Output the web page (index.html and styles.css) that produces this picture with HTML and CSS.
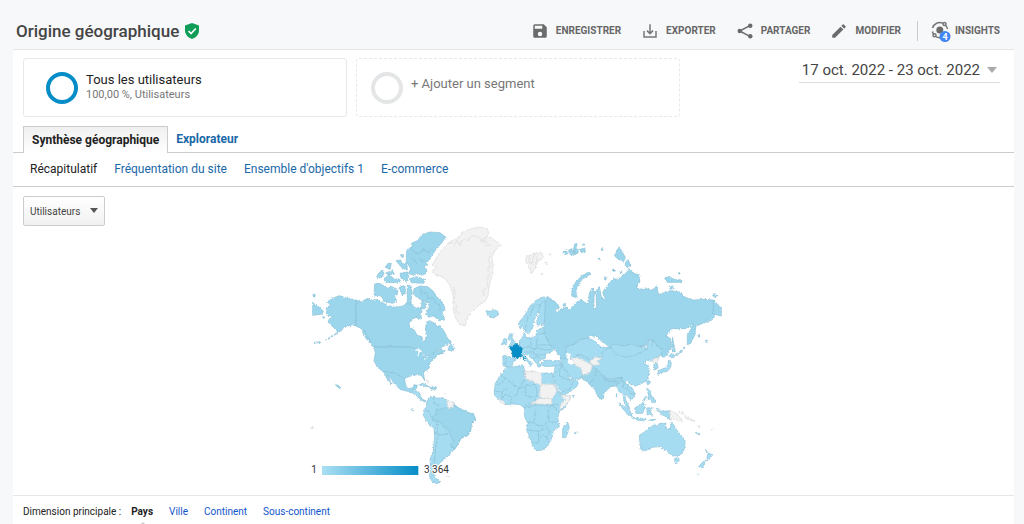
FILE: index.html
```html
<!DOCTYPE html>
<html lang="fr">
<head>
<meta charset="utf-8">
<title>Origine géographique</title>
<link rel="stylesheet" href="styles.css">
</head>
<body>
<header class="topbar">
  <h1 class="title">Origine géographique</h1>
  <svg class="shield" viewBox="0 0 14 16" aria-hidden="true"><path fill="#0f9d58" d="M7 0l7 2.600v5c0 4-3 7.200-7 8.400-4-1.200-7-4.400-7-8.400v-5z"/><path d="M3.500 8l2.500 2.500 4.800-5" fill="none" stroke="#fff" stroke-width="1.600"/></svg>
  <div class="actions">
    <button class="action"><svg class="icon" viewBox="0 0 24 24"><path fill="#6b6b6b" d="M17 3H5a2 2 0 0 0-2 2v14a2 2 0 0 0 2 2h14a2 2 0 0 0 2-2V7zm-5 16a3 3 0 1 1 0-6 3 3 0 0 1 0 6zm3-10H5V5h10z"/></svg>ENREGISTRER</button>
    <button class="action"><svg class="icon" viewBox="0 0 24 24"><path fill="none" stroke="#777" stroke-width="2" d="M4 12v8h16v-8M12 3v12M8 11.500L12 15.500l4-4"/></svg>EXPORTER</button>
    <button class="action"><svg class="icon" viewBox="0 0 24 24"><path fill="none" stroke="#6b6b6b" stroke-width="2" d="M19 4.500L5 12l14 7.500"/><g fill="#6b6b6b"><circle cx="19" cy="5" r="3"/><circle cx="5" cy="12" r="3"/><circle cx="19" cy="19" r="3"/></g></svg>PARTAGER</button>
    <button class="action"><svg class="icon" viewBox="0 0 24 24"><path fill="#6b6b6b" d="M3 17.250V21h3.750L17.800 9.940l-3.750-3.750zM20.700 7.040a1 1 0 0 0 0-1.410l-2.340-2.340a1 1 0 0 0-1.410 0l-1.830 1.830 3.750 3.750z"/></svg>MODIFIER</button>
    <button class="action insights"><svg class="insight-icon" viewBox="0 0 20 20"><g fill="none" stroke="#777" stroke-width="1.500"><path d="M1.500 7A7.500 7.500 0 0 1 12 2.300M14.500 4.200A7.500 7.500 0 0 1 16.500 8M1.500 10.500A7.500 7.500 0 0 0 2.400 13M5 15.700A7.500 7.500 0 0 0 10 16.500"/><circle cx="13.500" cy="3" r="1.500"/><circle cx="3.500" cy="14.300" r="1.500"/></g><circle cx="8.800" cy="9" r="3.500" fill="#6b6b6b"/><circle cx="14" cy="15.500" r="5.500" fill="#4285f4"/><text x="14" y="18.500" text-anchor="middle" class="badge-text">4</text></svg>INSIGHTS</button>
  </div>
</header>
<main class="panel">
  <section class="segments">
    <div class="segment"><span class="ring"></span><div class="segment-text"><div class="segment-name">Tous les utilisateurs</div><div class="segment-info">100,00 %, Utilisateurs</div></div></div>
    <button class="segment segment-add"><span class="ring ring-empty"></span><span class="add-label">+ Ajouter un segment</span></button>
    <button class="date">17 oct. 2022 - 23 oct. 2022<span class="caret"></span></button>
  </section>
  <nav class="tabs"><a class="tab tab-active" href="#">Synthèse géographique</a><a class="tab" href="#">Explorateur</a></nav>
  <nav class="subtabs"><a class="current" href="#">Récapitulatif</a><a href="#">Fréquentation du site</a><a href="#">Ensemble d'objectifs 1</a><a href="#">E-commerce</a></nav>
  <section class="report">
    <div class="metric"><select class="metric-select" aria-label="Statistique"><option>Utilisateurs</option></select><span class="metric-caret"></span></div>
    <svg class="map" viewBox="0 0 1296 804" role="img" aria-label="Utilisateurs par pays">
      <defs>
        <linearGradient id="scale"><stop offset="0" stop-color="#aadff3"/><stop offset="1" stop-color="#058dc7"/></linearGradient>
        <filter id="coast" x="-2%" y="-2%" width="104%" height="104%" color-interpolation-filters="sRGB"><feTurbulence type="fractalNoise" baseFrequency="0.2" numOctaves="2" seed="4"/><feDisplacementMap in="SourceGraphic" scale="9" xChannelSelector="R" yChannelSelector="G"/></filter>
      </defs>
      <g class="land" filter="url(#coast)">
        <g class="mid">
          <path d="M38 248L70 270 66 282 38 286zM39 223h7v8h-7zM68 290l7 2-5 4z"/>
          <path d="M80 262L92 256 82 246 94 236 118 227 140 234 168 240V318L158 314 145 318 132 320 126 330 112 340 92 352 76 360 108 342 112 334 96 318 84 306 88 296 100 292 80 284 78 274zM44 366h8v3h-8zM56 365h6v3h-6z"/>
          <path d="M168 240L185 246 196 238 210 236 214 242 232 238 240 244 262 256 285 262 310 258 322 246 335 252 345 264 362 262 366 276 352 290 338 296 326 308 330 322 342 330 352 346 366 350 370 366 376 362 382 346 376 330 380 306 390 302 404 310 412 320 420 316 434 336 440 350 454 368 440 374 420 384 408 394 398 404 380 408 370 416 366 402 350 386 330 381H222L212 370 200 350 184 326 168 318z"/>
          <path d="M448 378L454 372 464 386 454 394 444 390zM420 398l16-8-6 10-8 2zM188 328l12 16 12 22-10-6-14-22z"/>
          <path d="M342 206L360 198 384 200 400 214 412 232 430 250 436 268 426 276 434 300 418 302 400 288 386 292 376 282 388 262 384 248 366 240 350 232 340 222zM352 294l8-10 6 10-8 6zM366 240l12 10-4 16-10 0z"/>
          <path class="line" d="M362 204l4 20 14-8 4 20 16-4 6 18 14 4 0 18"/>
          <path d="M224 192L238 190 256 200 264 206 270 198 290 206 292 222 284 230 290 244 278 250 250 244 246 230 236 226 222 228zM298 202l16-6 4 24-12 4zM322 196h10l4 26-4 30h-10z"/>
          <path d="M334 70L352 62 366 44 390 36 420 38 436 50 430 64 414 80 404 94 392 112 388 122 376 126 384 134 372 142 382 150 378 160 368 166 350 160 340 166 326 160 332 146 326 136 318 120 320 92 328 82 336 84zM328 176L350 170 374 178 372 190 334 188z"/>
          <path class="line" d="M334 82l10 16 16 2 10-14 14 12 14-12M330 112l16 8 4 14M356 112l8 14 10-6"/>
          <path d="M228 168L246 150 252 160 246 172 236 174zM252 176L268 164 284 178 300 176 302 186 280 188 256 186zM256 142l8-12h10l-4 18zM288 122l14-2 6 14 12-8 2 24-16-6zM300 160l22-4 4 14-6 14-16-8zM304 104h6v8h-6zM258 158l20-6 4 10-18 4z"/>
          <path d="M222 381H330L348 386 360 398 372 404 370 414 384 410 398 402 412 392 424 386 430 396 412 406 404 416 388 428 388 444 370 458 374 482 366 468 352 464 338 466 316 474 314 480 300 468 288 458 272 458 250 454 232 442 222 422 226 400z"/>
          <path d="M250 454L272 458 288 458 300 468 314 480 318 498 324 506 338 504 342 494 352 496 348 508 340 510 330 516 300 508 286 494 264 464 272 486 275 492 262 478zM104 493l8 3 10 6-2 4-8-6z"/>
        </g>
        <g class="light">
          <path d="M330 516L340 510 346 512 360 518V532L372 540 378 540 370 545 356 534 344 522zM356 494l12-4 24 12-14-2zM394 502h16l-2 6h-14zM333 568h5v4h-5z"/>
          <path d="M380 544L386 534 402 528 406 534 430 534 440 540 462 548 468 560 484 568 500 576 520 582 526 596 514 612 512 632 504 646 484 654 474 672 462 690 450 694 452 704 434 712 428 722 418 730 410 744 400 758 404 770 420 786 410 791 396 784 388 768 392 750 390 720 400 690 404 650 402 624 384 610 370 586 372 568 380 560z"/>
          <path class="strong" d="M396 592L408 584V570L420 568 436 562 444 566 462 560 468 558 484 568 500 576 520 582 526 596 514 612 512 632 504 646 484 654 474 672 464 688 450 676 460 662 452 646 446 630 430 620 420 604 400 602z"/>
          <path class="line" d="M372 568L386 574 396 592M402 624L404 642 412 642V604M412 642L430 644 446 640M412 650L406 690 402 730M402 528V550L416 556 408 570"/>
        </g>
        <g class="none">
          <path d="M440 540L462 548 460 562 444 566zM376 478l12 8-4 4zM434 518h4v4h-4zM440 768h8v2h-8zM34 622h6v3h-6z"/>
          <path d="M396 136L412 110 426 88 450 66 480 50 488 36 520 24 556 22 568 36 562 48 592 66 602 76 584 92 576 112 580 140 578 166 572 180 566 206 564 226 556 244 538 254 522 270 508 284 498 300 496 318 478 312 466 290 458 262 460 232 454 204 436 176 420 168 402 164 398 150 412 142z"/>
          <path class="line" d="M450 66l12 10 8-14 10 14 10-20 14 6 12-16 18 4 10 10 16-8M562 48l-20 14 20 4-10 12 24-4M572 100l-8 20 8 14-10 16 8 10-10 20 4 20-14 10 2 18M460 200l6 20-6 20 10 14-4 16 14 14"/>
          <path d="M676 112L690 106 702 100 726 98 732 112 712 124 706 144 696 160 686 142 678 126zM736 128h6v4h-6zM748 102h5v3h-5zM724 160h4v4h-4z"/>
          <path class="line" d="M690 106l-4 20 10 6 6-30 10 12-6 20"/>
        </g>
        <g class="light">
          <path d="M558 272L574 274 578 269 592 272 596 284 580 294 564 288z"/>
          <path d="M656 308L678 282 690 258 710 240 732 230 748 234 740 246 738 300 732 312 712 316 710 300 720 284 716 276 702 300 700 318 686 342 676 336 668 320 660 328z"/>
          <path class="line" d="M676 334L680 304 690 282 706 250 718 258 716 276M718 258L732 240 738 248"/>
          <path d="M628 344L638 340 636 352 644 366 648 374 628 378 634 364 624 356zM612 356l10 2-2 12-16 4z"/>
          <path d="M658 362L668 354 672 338 678 346 676 354 690 352 708 350 710 330 732 322 738 350 748 374 764 386 754 396 736 402V416L720 418 716 428 724 436 716 442 708 426 698 418 686 408 680 402 670 404 690 422 698 430 690 440 686 428 668 412 660 404z"/>
          <path class="line" d="M668 384l20-4 10 6 18-2 16 6 22-2M690 352l4 28M712 352l-4 32M732 340l-24 4M712 376l28-2M676 396l22 0 10-12M698 400l22 6 16-4M700 416l12-6 8 4"/>
          <path d="M608 410L612 406 642 414 650 416 640 426 636 438 624 442 610 438z"/>
          <path class="line" d="M618 412l-2 26"/>
          <path d="M724 428L740 420 762 422 780 422 786 434 766 438 736 440 726 436z"/>
          <path d="M766 438L786 432 780 414 802 416 814 436 826 432 844 444 848 466 840 478 818 476 802 464 810 478 822 480 836 486 830 500 806 518 786 526 778 510 766 490 758 472 762 458z"/>
          <path class="line" d="M766 458l14-10 6-14 12 20 8 12M780 448l-2 20 22 10 12 4M786 516l22-8 12-24"/>
        </g>
        <path class="mid" d="M736 246L746 232 772 250 778 264 764 270 770 276 784 268 800 262 808 270 828 248 844 240 864 254 868 220 876 204 884 212 880 268 890 262 888 212 898 200 904 232 918 242 908 216 928 190 940 176 954 178 970 166 980 158 988 146 1000 160 1016 164 1020 184 1008 204 1028 208 1040 206 1056 210 1070 200 1076 224 1110 212 1140 216 1156 232 1180 240 1210 238 1240 240 1264 264V288L1246 284 1236 300 1210 310 1188 318 1184 346 1172 370 1162 374V346L1180 310 1168 318 1160 326H1114L1098 348 1112 356 1114 380 1100 406 1088 412 1080 400 1086 388 1070 378 1062 362 1046 358 1038 378 1020 380 994 370 976 380 940 376 930 382 906 364 890 350 870 346 856 356 834 360 830 372 800 380 802 412 814 418 786 416 774 402 764 386 748 374 738 350 732 330z"/>
        <path class="line" d="M1240 240v44"/>
        <g class="mid">
          <path d="M815 228L816 204 830 182 848 166 868 156 872 162 846 178 832 200 828 220 832 234zM790 252l6-2 0 8-6 0zM914 170h4v10h-4zM938 150h6v4h-6z"/>
          <path d="M946 98L958 80 968 98 976 112 972 124 958 120 946 110zM976 124l8-6 8 20-16 2zM960 154h6v4h-6z"/>
          <path d="M1094 174L1106 168 1122 178 1146 180 1144 187 1102 187zM1108 198h10l4 8-12 2zM1136 158h4v4h-4zM1238 226l6-4 8 6-10 4zM895 114h4v4h-4zM904 86h5v5h-5z"/>
          <path d="M788 96l12-4 4 8-10 4zM806 90l10-4-2 12 12-10-4 18-14-4zM824 72l8-2-4 14 8 12-10 8-6-12zM838 88l16-4 2 10-12 4zM848 72h5v4h-5z"/>
          <path d="M1118 352L1122 378 1126 396 1116 392V370zM1150 382h4v4h-4zM1194 346h5v5h-5zM1217 360h5v4h-5z"/>
        </g>
        <g class="light">
          <path d="M798 396L798 380 824 372 844 358 866 354 886 364 904 382 930 382 920 404 906 412 884 412 870 422 856 412 840 404 828 408 824 420 812 416 808 402 800 404z"/>
          <path d="M828 408L840 402 860 414 878 426 870 432 854 424 836 416z"/>
          <path d="M930 382L942 372 974 378 994 372 1020 380 1040 386 1046 360 1060 362 1070 378 1086 386 1088 396 1078 410 1066 412 1054 424 1038 420 1030 430 1046 438 1048 460 1040 482 1018 494 1006 498 990 492 980 482 970 490 962 472 930 478 908 468 896 450 880 442 870 430 878 424 904 418 908 406 904 398z"/>
          <path class="line" d="M930 382L950 404 980 412 1010 404 1040 388 1030 376"/>
          <path d="M948 484L964 472 974 490 986 494 998 508 1006 522 1000 536 990 538 982 526 974 524 978 542 986 558 990 568 978 560 972 542 968 520 958 516 950 500z"/>
          <path class="line" d="M968 484l4 20 12 4 8 14 12 0M984 494l-2 14M1060 360l-4 20"/>
          <path d="M1062 430h10l2 14-10 6zM1074 452L1100 442 1106 420 1114 428 1112 442 1102 454 1080 458 1076 464zM1106 408l10-8 10 6-10 8zM1126 404l20-14 2 3-20 14zM1040 484l8-4 0 12-6 2z"/>
          <path d="M1040 506l12 4 0 16 12 12 2 10-10-2-4-10-10 4 4-14zM1040 530l-8 12-2-2 8-12zM948 522l5 0 0 8-5 0z"/>
          <path d="M956 548L968 556 990 572 998 590 982 582 970 568zM994 592l24 2 20 4-2 5-24-3zM1004 564L1030 548 1036 560 1028 580 1008 580zM1040 564l20-2-12 8 10 16-8-4-8 4zM1070 564l8 4-6 6zM1048 600l20-3-8 5z"/>
          <path d="M1074 572L1090 574 1110 572V600L1102 592 1086 584z"/>
          <path d="M1018 646L1036 634 1050 620 1066 614 1072 620 1078 610 1098 610 1096 624 1110 628 1116 606 1130 630 1150 654 1156 670 1152 690 1140 706 1118 708 1100 692 1080 680 1056 682 1042 692 1024 690 1020 670zM1122 714l16 0-6 16-6 0z"/>
          <path d="M1216 688l10 12 12 4-12 16-6-4 4-14zM1220 720L1206 744 1196 740 1208 726zM1188 636l12 6-2 3-12-7zM1192 762h5v3h-5z"/>
        </g>
        <path class="mid" d="M848 478L846 468 868 456 878 442 892 448 908 468 930 480 964 472 966 482 954 490 948 498 932 500 912 520 910 536 902 540 892 526 882 502 872 500 866 488z"/>
        <path class="line" d="M868 490L884 472 890 450M908 468l4 8 20 10 16-4v14"/>
        <g class="light">
          <path d="M620 442L644 440 670 434 674 452 686 456 724 460 756 458 760 470 756 474 766 498 776 516 784 528 812 528 808 544 790 566 776 576 774 598 778 620 760 634 756 652 744 678 726 690 708 692 700 682 692 660 680 630 682 608 674 590 672 562 660 554 640 552 616 554 602 544 584 526 582 518 586 490 602 466z"/>
          <path d="M788 622L804 608 808 622 798 652 788 654zM824 638h4v3h-4zM830 636h4v3h-4zM818 526h5v3h-5z"/>
          <path class="line" d="M602 466L616 474 606 490 590 494M616 474L656 506 676 476 670 450M656 506L650 526 636 532 632 552M586 514L606 516 620 506M606 516l0 22M636 532l-20-10-14 18M656 506l20-8 30-6 6 26-8 26-28 12M676 526l24 6M676 498l0 28M724 494l0 30M672 562l30-6 18 0 34 0 18 14M682 608l20 0 6-38M702 608l10 8 20 2 12-16M754 556l-10 20 4 30M680 630l36 4 0 34-18 0M716 634l24-12 10 14-10 16 4 14M716 656l14-12 14 12M748 606l24 0M790 566l-20-14-16 4"/>
        </g>
        <g class="none">
          <path d="M674 452L686 456 702 454 724 460V498L690 480 676 476zM724 492L764 494 770 514 756 536 736 534 718 532 720 510zM692 550L718 536 754 536 756 552 720 552zM784 528L812 528 808 544 780 570V556L796 540zM596 538L610 542 616 552 604 548z"/>
          <path d="M814 414L832 414 856 424 874 434 876 442 870 458 848 466 844 448 824 432zM870 422L886 412 906 414 892 424 900 434 880 436 872 430zM1054 422L1078 410 1074 424 1064 430zM1110 572L1132 582 1148 604 1130 600 1110 598zM1138 574l14 6-2 3-14-6zM1156 588l26 14-2 3-26-12zM1194 616l6 4 0 4-6-4zM1234 630l6-8-2 10z"/>
        </g>
        <path class="france" d="M626 380L638 380 648 370 658 378 668 386 664 396V410L652 414 638 410 636 394zM670 411h3v8h-3z"/>
        <path class="water" d="M345 391l10-5 10 8-8 3-4 14 4-16M366 398l7 12M372 416l12-4M742 398l8 6 10-5-2 7 18 6-10 7-16-2-12 0zM800 398l12 6-4 10 8 8-2 12-10-6 2-12-6-8z"/>
      </g>
      <rect x="66" y="738" width="289" height="27" fill="url(#scale)"/>
      <text class="legend" x="34" y="760">1</text><text class="legend" x="372" y="760">3 364</text>
    </svg>
  </section>
  <nav class="dimensions"><span>Dimension principale :</span><a class="selected" href="#">Pays</a><a href="#">Ville</a><a href="#">Continent</a><a href="#">Sous-continent</a></nav>
</main>
</body>
</html>
```
FILE: styles.css
```css
* { box-sizing: border-box; }
body { margin: 0; background: #f7f8fa; color: #222; font-family: Roboto, "Liberation Sans", sans-serif; font-size: 13px; overflow: hidden; }
button { font: inherit; color: inherit; background: none; border: 0; padding: 0; }
a { color: #1a68a8; text-decoration: none; }
.topbar { display: flex; align-items: center; height: 49px; padding: 12px 24px 0 16px; }
.title { margin: 0; font-size: 17px; line-height: 24px; font-weight: 500; color: #444; }
.shield { width: 14px; height: 16px; margin-left: 6px; }
.actions { display: flex; align-items: center; margin-left: auto; gap: 20px; }
.action { display: flex; align-items: center; gap: 7px; font-size: 10px; font-weight: 700; line-height: 20px; color: #666; }
.icon { width: 18px; height: 18px; }
.insights { border-left: 1px solid #ccc; padding-left: 13px; gap: 4px; margin-left: -4px; }
.insight-icon { width: 20px; height: 20px; overflow: visible; }
.badge-text { fill: #fff; font-size: 9px; font-weight: 700; }
.panel { margin: 0 10px 0 13px; background: #fff; border-top: 1px solid #e6e6e6; }
.segments { display: flex; align-items: flex-start; gap: 9px; padding: 8px 14px 0 10px; }
.segment { display: flex; flex: 0 1 324px; align-items: center; height: 59px; padding-left: 22px; gap: 8px; border: 1px solid #e8e8e8; border-radius: 3px; text-align: left; }
.segment-add { padding-left: 14px; border-style: dashed; }
.segment-text { padding-bottom: 2px; }
.ring { width: 32px; height: 32px; border: 4px solid #058dc7; border-radius: 50%; }
.ring-empty { border-color: #e4e5e6; }
.segment-name { font-size: 13px; line-height: 16px; color: #222; }
.segment-info { font-size: 11px; line-height: 14px; color: #777; }
.add-label { padding-bottom: 8px; font-size: 13px; color: #777; }
.date { display: flex; align-items: center; gap: 7px; margin-left: auto; padding: 0 3px; height: 25px; border-bottom: 1px solid #ddd; font-size: 15px; color: #444; }
.caret { border: 5px solid transparent; border-top: 6px solid #aaa; border-bottom: 0; }
.tabs { display: flex; margin-top: 9px; padding-left: 10px; border-bottom: 1px solid #ccc; }
.tab { padding: 0 8px; line-height: 26px; font-size: 12px; font-weight: 700; }
.tab-active { margin-bottom: -1px; border: 1px solid #ccc; border-bottom: 0; background: linear-gradient(#f0f0f0, #fff); color: #222; }
.subtabs { display: flex; gap: 17px; padding: 0 17px; font-size: 12px; line-height: 33px; border-bottom: 1px solid #ccc; }
.current { color: #222; }
.report { display: grid; grid-template-columns: 277px 1fr 282px; align-items: start; height: 308px; padding: 9px 0 0 10px; }
.metric { position: relative; width: 82px; }
.metric-select { width: 100%; height: 30px; padding: 0 6px; appearance: none; border: 1px solid #ccc; border-radius: 2px; background: linear-gradient(#fff, #f1f1f1); color: #444; font: 10px Roboto, sans-serif; }
.metric-caret { position: absolute; top: 12px; right: 7px; border: 4px solid transparent; border-top: 5px solid #555; border-bottom: 0; pointer-events: none; }
.map { width: 100%; height: auto; margin-top: 24px; }
.land path { stroke: #8bbfd4; stroke-width: 2; stroke-linejoin: round; }
.land .mid, .land .strong { fill: #9bd6ed; }
.light { fill: #a6dcf1; }
.land .none path { stroke: #d9d9d9; }
.none { fill: #f2f2f2; }
.land .line { fill: none; stroke-width: 2; }
.land .france { fill: #058dc7; stroke: #0780b6; }
.land .water { fill: #fff; stroke: #fff; }
.legend { font-size: 30px; fill: #333; stroke: #fff; stroke-width: 6px; paint-order: stroke; }
.dimensions { display: flex; gap: 16px; padding: 0 10px; border-top: 1px solid #e6e6e6; font-size: 10px; line-height: 31px; height: 29px; }
.dimensions span { margin-right: -6px; }
.dimensions a { color: #1155cc; }
.dimensions .selected { position: relative; color: #222; font-weight: 700; }
.selected::after { content: ""; position: absolute; left: 8px; bottom: -2px; border: 4px solid transparent; border-bottom-color: #ccc; border-top: 0; }
```
